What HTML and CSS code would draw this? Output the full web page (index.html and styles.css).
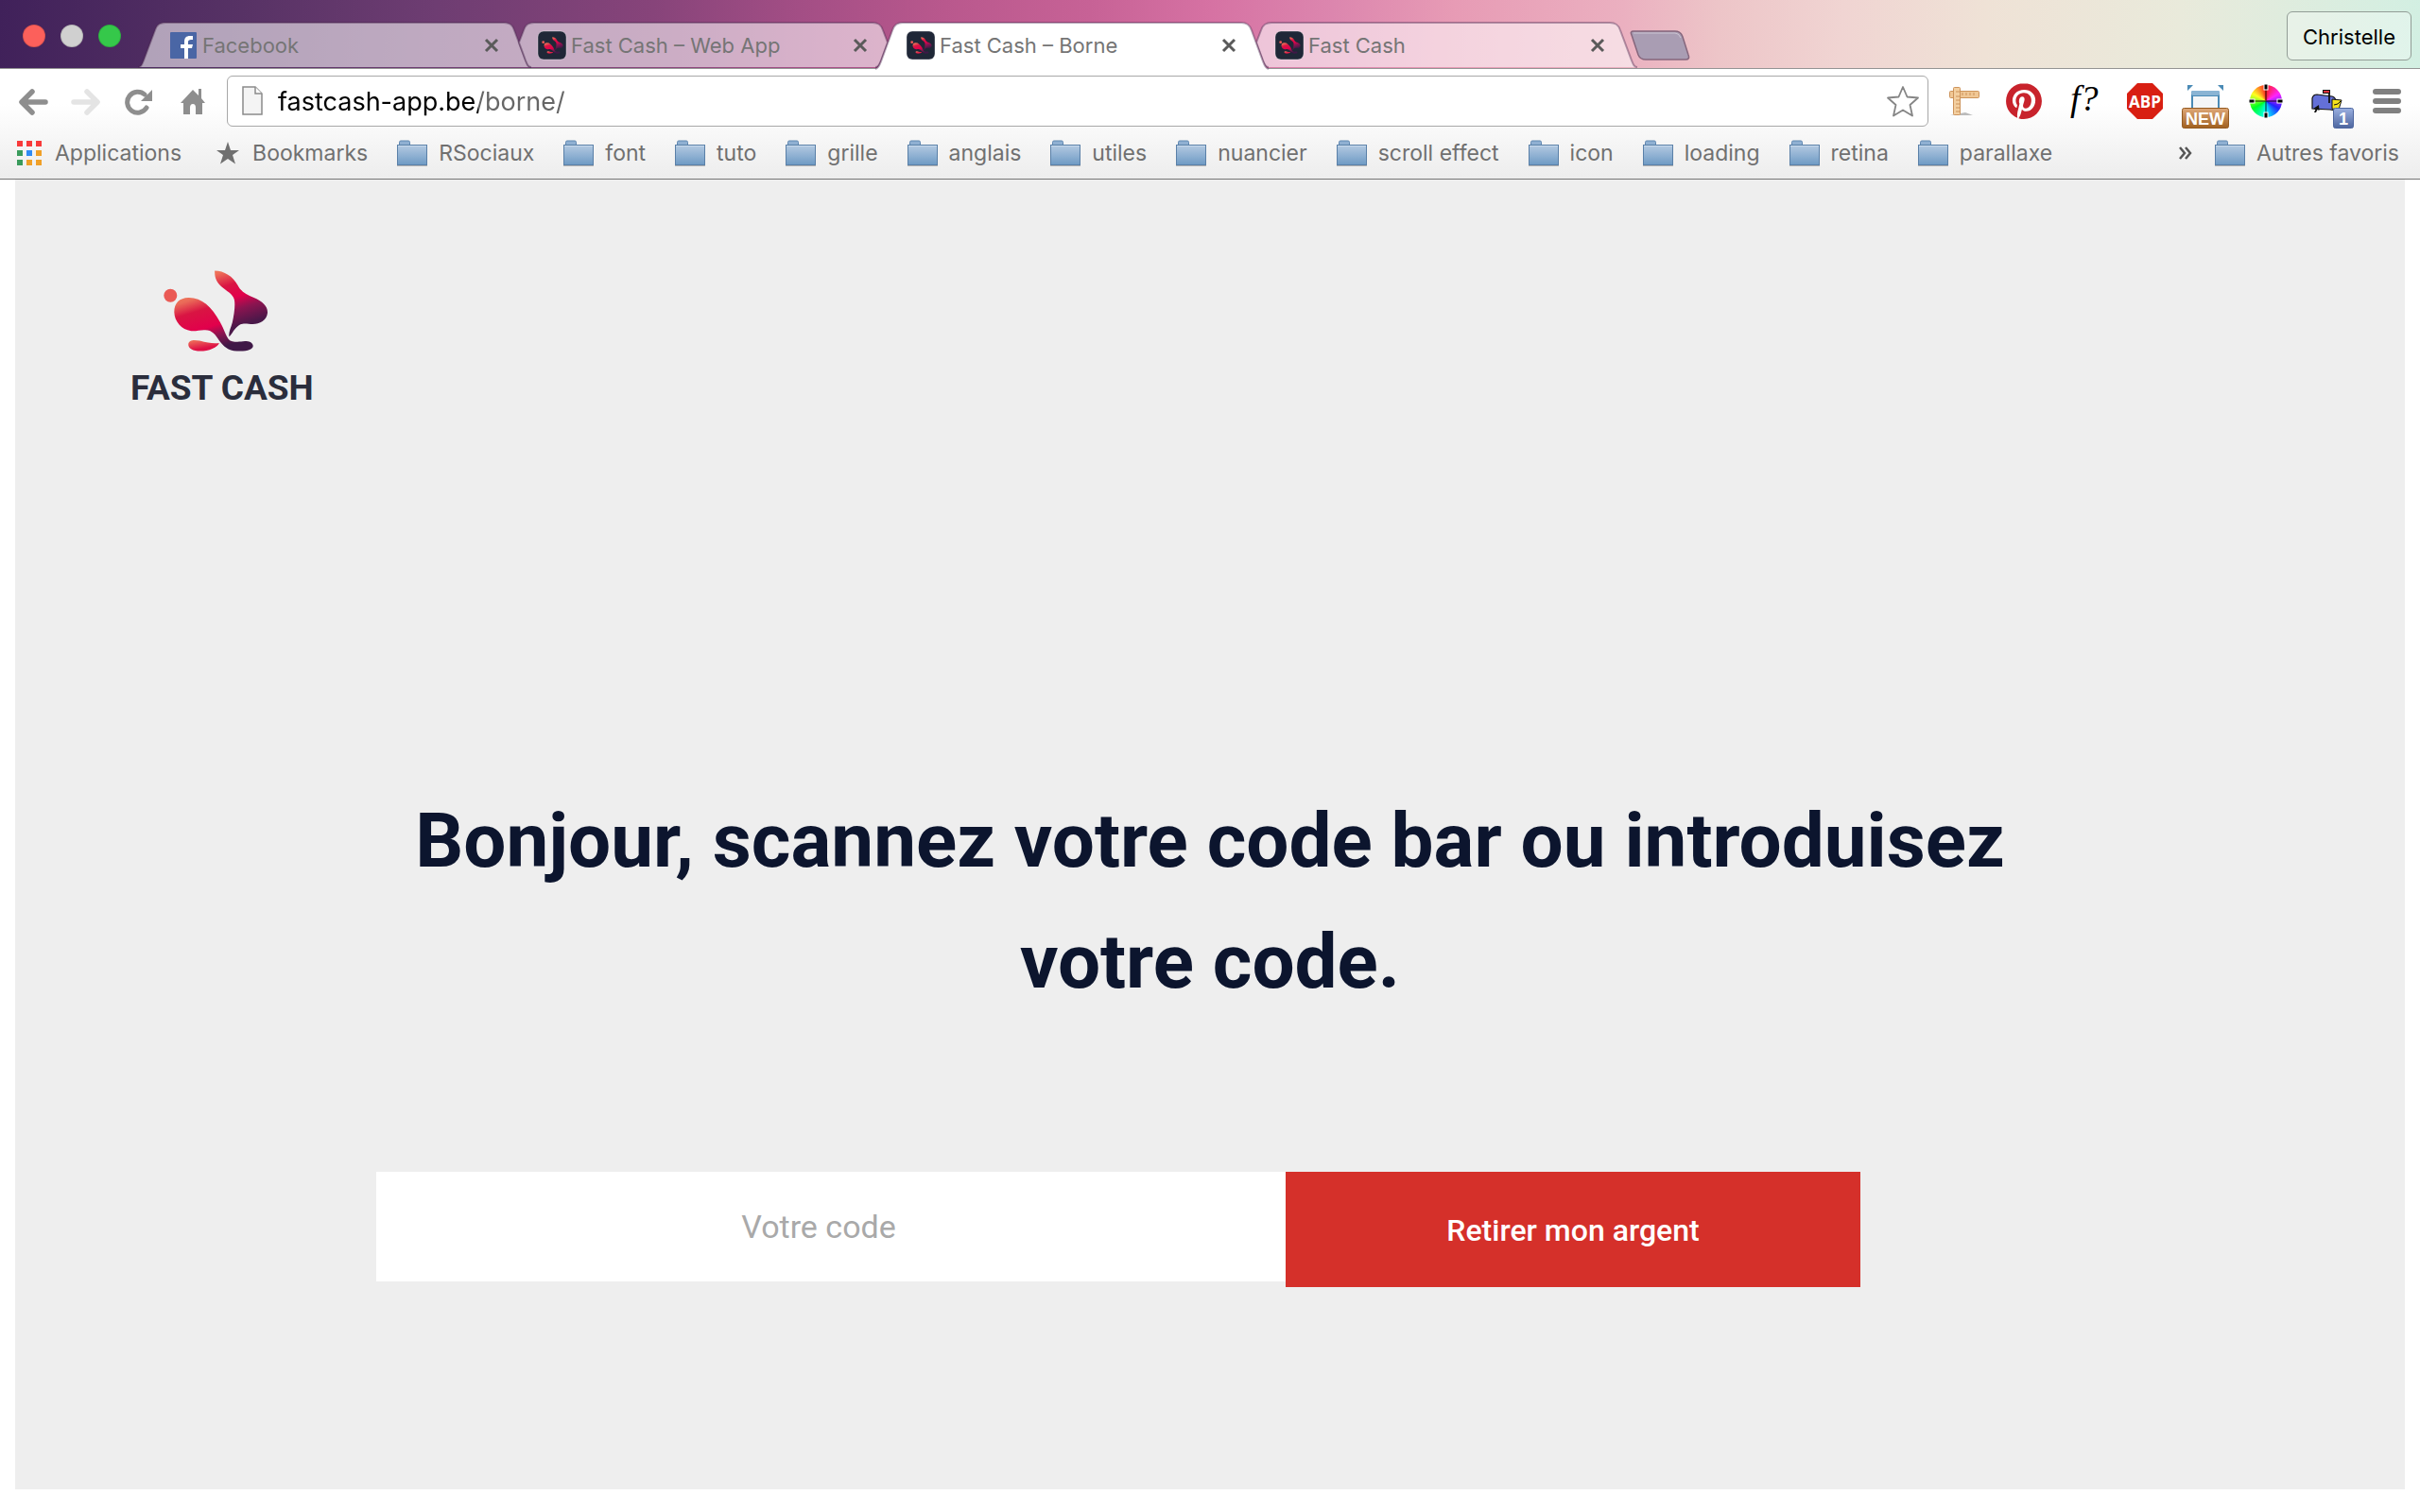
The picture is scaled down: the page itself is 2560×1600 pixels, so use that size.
FILE: index.html
```html
<!DOCTYPE html>
<html lang="fr">
<head>
<meta charset="utf-8">
<meta name="viewport" content="width=device-width, initial-scale=1">
<title>Fast Cash – Borne</title>
<link rel="stylesheet" href="styles.css">
</head>
<body>
<svg class="defs" aria-hidden="true">
  <defs>
    <linearGradient id="g-body" x1="0" y1="0" x2=".45" y2="1">
      <stop offset="0" stop-color="#f07a5c"/><stop offset=".12" stop-color="#ea6a58"/><stop offset=".32" stop-color="#d91543"/>
      <stop offset=".62" stop-color="#e2004c"/><stop offset=".78" stop-color="#8c1450"/><stop offset="1" stop-color="#3f1847"/>
    </linearGradient>
    <linearGradient id="g-ear" x1=".2" y1="0" x2=".45" y2="1">
      <stop offset="0" stop-color="#ee7158"/><stop offset=".22" stop-color="#d91543"/><stop offset=".42" stop-color="#e2004c"/>
      <stop offset=".6" stop-color="#8c1450"/><stop offset=".85" stop-color="#4a1849"/>
    </linearGradient>
    <linearGradient id="g-foot" x1="0" y1="0" x2=".5" y2="1">
      <stop offset="0" stop-color="#f07a5c"/><stop offset=".8" stop-color="#de1045"/>
    </linearGradient>
    <linearGradient id="g-folder" x1="0" y1="0" x2="0" y2="1">
      <stop offset="0" stop-color="#b4cae2"/><stop offset="1" stop-color="#6e9ac4"/>
    </linearGradient>
    <linearGradient id="g-new" x1="0" y1="0" x2="0" y2="1">
      <stop offset="0" stop-color="#dfa878"/><stop offset="1" stop-color="#a0601f"/>
    </linearGradient>
    <linearGradient id="g-count" x1="0" y1="0" x2="0" y2="1">
      <stop offset="0" stop-color="#9bb0e0"/><stop offset="1" stop-color="#4d669f"/>
    </linearGradient>
    <symbol id="rabbit" viewBox="216 74 340 264">
      <circle cx="241" cy="157" r="21" fill="#ea5a55"/>
      <path fill="url(#g-body)" d="M253 210C253 180 270 165 298 164C340 163 372 193 398 240C412 264 417 285 426 296C434 305 450 305 466 304C478 300 503 302 504 317C504 329 485 334 455 334C425 335 410 318 396 300C384 282 374 267 352 267C336 266 325 271 307 270C276 266 254 240 253 210Z"/>
      <path fill="url(#g-ear)" d="M382 78C412 78 440 96 455 124C466 146 484 154 505 163C535 175 551 192 550 212C548 236 525 248 503 248C485 248 473 243 459 252C443 263 439 278 428 288C425 275 433 262 438 243C444 217 448 185 444 169C438 151 420 143 405 130C388 116 381 100 382 78Z"/>
      <path fill="url(#g-foot)" d="M298 311C300 298 316 297 334 301C360 308 378 310 396 308C392 322 362 334 336 334C313 333 297 326 298 311Z"/>
    </symbol>
    <symbol id="folder" viewBox="0 0 32 28">
      <path d="M2.500 6V2.500Q2.500 1 4 1H12Q13.500 1 13.500 2.500V6Z" fill="#8fb0d2" stroke="#5f87b0"/>
      <rect x=".5" y="5.500" width="31" height="21" fill="url(#g-folder)" stroke="#5a80a8"/>
      <path d="M1 6.500H31" stroke="#c8daec"/>
      <path d="M0 27.500H32" stroke="#000" stroke-opacity=".25"/>
    </symbol>
    <symbol id="close" viewBox="0 0 16 16"><path d="M2 2L14 14M14 2L2 14" stroke="#5a5a5a" stroke-width="3"/></symbol>
    <symbol id="app" viewBox="0 0 32 32">
      <rect x="1" y="1" width="30" height="30" rx="6" fill="#1f2737" stroke="#fff" stroke-opacity=".35"/>
      <use href="#rabbit" x="5" y="7" width="23" height="18"/>
    </symbol>
  </defs>
</svg>

<header class="browser">
  <div class="strip">
    <div class="lights">
      <button class="light red" aria-label="Fermer"></button>
      <button class="light gray" aria-label="Réduire"></button>
      <button class="light green" aria-label="Agrandir"></button>
    </div>
    <div class="tabs">
      <div class="tab first">
        <svg class="shape" viewBox="0 0 416 49" preserveAspectRatio="none"><path d="M0 48C3 48 4 46 6 41L18 9C20 3 23 1 29 1H387C393 1 396 3 398 9L410 41C412 46 413 48 416 48"/></svg>
        <div class="tab-in">
          <svg class="fav" viewBox="0 0 32 32"><rect x="2" y="2" width="28" height="28" rx="1" fill="#4a66a5"/><path fill="#fff" d="M17 30V19H13V15H17V12C17 8 19 6 23 6H26V10H24C22 10 21 11 21 12V15H26L25 19H21V30Z"/></svg>
          <span class="title">Facebook</span>
          <button class="x" aria-label="Fermer l'onglet"><svg viewBox="0 0 16 16"><use href="#close"/></svg></button>
        </div>
      </div>
      <div class="tab second">
        <svg class="shape" viewBox="0 0 416 49" preserveAspectRatio="none"><path d="M26 48C23 48 22 46 20 41L13 22L18 9C20 3 23 1 29 1H387C393 1 396 3 398 9L403 22L396 41C394 46 393 48 390 48"/></svg>
        <div class="tab-in">
          <svg class="fav" viewBox="0 0 32 32"><use href="#app"/></svg>
          <span class="title">Fast Cash – Web App</span>
          <button class="x" aria-label="Fermer l'onglet"><svg viewBox="0 0 16 16"><use href="#close"/></svg></button>
        </div>
      </div>
      <div class="tab active">
        <svg class="shape" viewBox="0 0 416 49" preserveAspectRatio="none"><path d="M0 49C3 48 4 46 6 41L18 9C20 3 23 1 29 1H387C393 1 396 3 398 9L410 41C412 46 413 48 416 49"/></svg>
        <div class="tab-in">
          <svg class="fav" viewBox="0 0 32 32"><use href="#app"/></svg>
          <span class="title">Fast Cash – Borne</span>
          <button class="x" aria-label="Fermer l'onglet"><svg viewBox="0 0 16 16"><use href="#close"/></svg></button>
        </div>
      </div>
      <div class="tab last">
        <svg class="shape" viewBox="0 0 416 49" preserveAspectRatio="none"><path d="M26 48C23 48 22 46 20 41L13 22L18 9C20 3 23 1 29 1H387C393 1 396 3 398 9L410 41C412 46 413 48 416 48"/></svg>
        <div class="tab-in">
          <svg class="fav" viewBox="0 0 32 32"><use href="#app"/></svg>
          <span class="title">Fast Cash</span>
          <button class="x" aria-label="Fermer l'onglet"><svg viewBox="0 0 16 16"><use href="#close"/></svg></button>
        </div>
      </div>
    </div>
    <button class="newtab" aria-label="Nouvel onglet">
      <svg viewBox="0 0 64 32"><path d="M4 1H48Q54 1 56 7L62 26Q64 31 59 31H17Q11 31 9 26L2 5Q0 1 4 1Z" fill="#a99db3" stroke="#85667c" stroke-width="1.500"/><path d="M4 3H48Q52 3 54 8" fill="none" stroke="#fff" stroke-opacity=".4"/></svg>
    </button>
    <button class="profile">Christelle</button>
  </div>

  <div class="toolbar">
    <nav class="navs">
      <button aria-label="Retour"><svg viewBox="0 0 32 28"><path d="M15 3L4 14L15 25M5 14H29" fill="none" stroke="#8e8e8e" stroke-width="5.500" stroke-linecap="round" stroke-linejoin="round"/></svg></button>
      <button aria-label="Avancer"><svg viewBox="0 0 32 28"><path d="M17 3L28 14L17 25M3 14H27" fill="none" stroke="#e4e4e4" stroke-width="5.500" stroke-linecap="round" stroke-linejoin="round"/></svg></button>
      <button aria-label="Actualiser"><svg viewBox="0 0 32 28"><path d="M24 20A11 11 0 1 1 22 6" fill="none" stroke="#8e8e8e" stroke-width="5" stroke-linecap="round"/><path d="M30 1V13H18Z" fill="#8e8e8e"/></svg></button>
      <button aria-label="Accueil"><svg viewBox="0 0 32 28"><path fill="#8e8e8e" d="M17 1L23 7V0H26V10L30 15H27V27H20V20Q20 16 17 16Q14 16 14 20V27H7V15H4Z"/></svg></button>
    </nav>
    <div class="address">
      <svg class="doc" viewBox="0 0 22 32"><path d="M1 1H14L21 8V30H1Z" fill="#f4f4f4" stroke="#8a8a8a" stroke-width="1.500"/><path d="M14 1V8H21" fill="#fff" stroke="#8a8a8a" stroke-width="1.500"/></svg>
      <input class="url" type="text" aria-label="Adresse" value="fastcash-app.be/borne/">
      <button class="fave" aria-label="Ajouter aux favoris"><svg viewBox="0 0 36 34"><path d="M18 2L22.500 12.500L34 13.500L25.500 21L28 32.500L18 26.500L8 32.500L10.500 21L2 13.500L13.500 12.500Z" fill="#fff" stroke="#858585" stroke-width="1.800" stroke-linejoin="round"/></svg></button>
    </div>
    <div class="exts">
      <button aria-label="Règle"><svg viewBox="0 0 64 60"><path d="M18 45H42L34 42Z" fill="#bbb"/><rect x="17.500" y="19.500" width="31" height="7" rx="1" fill="#f0c795" stroke="#cd935a"/><rect x="21.500" y="15.500" width="7" height="29" rx="1" fill="#f3cfa0" stroke="#cd935a"/><path d="M31 21V24M35 21V24M39 21V24M43 21V24M24 29H28M24 33H28M24 37H28M24 41H28M24 25H28M24 20H28" stroke="#cd935a"/></svg></button>
      <button aria-label="Pinterest"><svg viewBox="0 0 64 60"><circle cx="32" cy="30" r="18" fill="#fff"/><path transform="translate(13 11) scale(1.583)" fill="#c8232c" d="M12.017 0C5.396 0 .029 5.367.029 11.987c0 5.079 3.158 9.417 7.618 11.162-.105-.949-.199-2.403.041-3.439.219-.937 1.406-5.957 1.406-5.957s-.359-.72-.359-1.781c0-1.663.967-2.911 2.168-2.911 1.024 0 1.518.769 1.518 1.688 0 1.029-.653 2.567-.992 3.992-.285 1.193.6 2.165 1.775 2.165 2.128 0 3.768-2.245 3.768-5.487 0-2.861-2.063-4.869-5.008-4.869-3.410 0-5.409 2.562-5.409 5.199 0 1.033.394 2.143.889 2.741.099.120.112.225.085.345-.090.375-.293 1.199-.334 1.363-.053.225-.172.271-.401.165-1.495-.690-2.433-2.878-2.433-4.646 0-3.776 2.748-7.252 7.920-7.252 4.158 0 7.392 2.967 7.392 6.923 0 4.135-2.607 7.462-6.233 7.462-1.214 0-2.354-.629-2.758-1.379l-.749 2.848c-.269 1.045-1.004 2.352-1.498 3.146 1.123.345 2.306.535 3.550.535 6.607 0 11.985-5.365 11.985-11.987C23.970 5.390 18.592.026 11.985.026L12.017 0z"/></svg></button>
      <button aria-label="Polices"><svg viewBox="0 0 64 60"><text class="fq" x="17" y="40">f?</text></svg></button>
      <button aria-label="Adblock Plus"><svg viewBox="0 0 64 60"><path d="M24 11H40L51 22V38L40 49H24L13 38V22Z" fill="#d81f12"/><text class="abp" x="32" y="37" text-anchor="middle">ABP</text></svg></button>
      <button aria-label="Fenêtre"><svg viewBox="0 0 64 60"><path d="M13 13H19L13 19ZM51 13H45L51 19Z" fill="#4a8ab5"/><rect x="17" y="19" width="30" height="24" rx="2" fill="#4a8ab5"/><rect x="17" y="19" width="30" height="5" rx="2" fill="#8ab4d4"/><rect x="19" y="25" width="26" height="14" fill="#f4f6f8"/><rect x="7.500" y="37.500" width="49" height="21" rx="2" fill="url(#g-new)" stroke="#945a20"/><text class="badge" x="32" y="55" text-anchor="middle">NEW</text></svg></button>
      <button aria-label="Pipette" class="wheel"><span class="hues"></span><svg viewBox="0 0 64 60"><path d="M32 14V46M16 30H48" stroke="#000" stroke-opacity=".6" stroke-width="1.500"/><g fill="#000" stroke="#fff" stroke-width="1"><rect x="30" y="12" width="4" height="6"/><rect x="30" y="42" width="4" height="6"/><rect x="14" y="28" width="6" height="4"/><rect x="44" y="28" width="6" height="4"/></g></svg></button>
      <button aria-label="Courrier"><svg viewBox="0 0 64 60"><path d="M17 38V27Q18 23 22 23L38 25Q42 26 42 31V40L36 39Z" fill="#6470d8" stroke="#111" stroke-width="1.200"/><path d="M38 28L48 29L45 39L38 38Z" fill="#f6e21c" stroke="#111"/><path d="M40 34L44 33L47 30" fill="none" stroke="#111"/><path d="M35 32V19" stroke="#111" stroke-width="1.800"/><rect x="28.500" y="18.500" width="7" height="3" fill="#e0303a" stroke="#111"/><path d="M24 34L18 38L20.500 38.500L19 42L21 42L22.500 39L24.500 40Z" fill="#111"/><rect x="39.500" y="37.500" width="21" height="21" rx="2" fill="url(#g-count)" stroke="#4d669f"/><text class="badge" x="50" y="55" text-anchor="middle">1</text></svg></button>
      <button aria-label="Menu"><svg viewBox="0 0 64 60"><path d="M20 20H44M20 30H44M20 40H44" stroke="#808080" stroke-width="6" stroke-linecap="round"/></svg></button>
    </div>
  </div>

  <nav class="marks" aria-label="Favoris">
    <a href="#" class="apps"><svg viewBox="0 0 26 26"><path d="M0 0H6V6H0ZM10 0H16V6H10ZM20 0H26V6H20Z" fill="#f83a3a"/><path d="M0 10H6V16H0ZM0 20H6V26H0Z" fill="#3a9b5c"/><path d="M10 10H16V16H10Z" fill="#2f8bf5"/><path d="M20 10H26V16H20ZM10 20H16V26H10ZM20 20H26V26H20Z" fill="#f0a028"/></svg>Applications</a>
    <a href="#" class="starred"><svg viewBox="0 0 24 24"><path fill="#707070" d="M12 0L15 9H24L17 14L20 23.500L12 18L4 23.500L7 14L0 9H9Z"/></svg>Bookmarks</a>
    <a href="#"><svg><use href="#folder"/></svg>RSociaux</a>
    <a href="#"><svg><use href="#folder"/></svg>font</a>
    <a href="#"><svg><use href="#folder"/></svg>tuto</a>
    <a href="#"><svg><use href="#folder"/></svg>grille</a>
    <a href="#"><svg><use href="#folder"/></svg>anglais</a>
    <a href="#"><svg><use href="#folder"/></svg>utiles</a>
    <a href="#"><svg><use href="#folder"/></svg>nuancier</a>
    <a href="#"><svg><use href="#folder"/></svg>scroll effect</a>
    <a href="#"><svg><use href="#folder"/></svg>icon</a>
    <a href="#"><svg><use href="#folder"/></svg>loading</a>
    <a href="#"><svg><use href="#folder"/></svg>retina</a>
    <a href="#"><svg><use href="#folder"/></svg>parallaxe</a>
    <button class="more" aria-label="Plus de favoris"><svg viewBox="0 0 14 14"><path d="M1 1L6 7L1 13M7 1L12 7L7 13" fill="none" stroke="#555" stroke-width="2.500"/></svg></button>
    <a href="#"><svg><use href="#folder"/></svg>Autres favoris</a>
  </nav>
</header>

<main class="kiosk">
  <a href="#" class="logo">
    <svg viewBox="216 74 340 264"><use href="#rabbit" x="216" y="74" width="340" height="264"/></svg>
    <span>FAST CASH</span>
  </a>
  <section class="welcome">
    <h1>Bonjour, scannez votre code bar ou introduisez votre code.</h1>
    <form class="withdraw">
      <input type="text" placeholder="Votre code" aria-label="Votre code">
      <button type="button">Retirer mon argent</button>
    </form>
  </section>
</main>
</body>
</html>
```
FILE: styles.css
```css
* { box-sizing: border-box; }

body {
  margin: 0;
  min-height: 100vh;
  display: flex;
  flex-direction: column;
  background: #fff;
  font-family: Roboto, "Liberation Sans", sans-serif;
}

button, input {
  margin: 0;
  padding: 0;
  border: 0;
  background: none;
  font: inherit;
}

svg { display: block; }
.defs { position: absolute; width: 0; height: 0; }

.browser {
  font-family: Inter, "Liberation Sans", sans-serif;
  background: linear-gradient(#fff 72px, #fff 110px, #ededed 188px);
  border-bottom: 1px solid #757575;
}

/* Window title bar and tabs */
.strip {
  display: flex;
  height: 73px;
  padding-right: 9px;
  border-bottom: 1px solid #949494;
  background: linear-gradient(93deg, #40215a 0%, #573265 10%, #6e3d72 18%, #87447a 27%, #a34e85 33%, #b9588d 39%, #c76296 45%, #d672a3 50%, #dc86ae 55%, #e79bb5 60%, #ebb0c0 67%, #edc5c8 71%, #f0d4d2 76%, #efe2d6 82%, #e9eadb 90%, #d2efe2 100%);
}

.lights {
  display: flex;
  gap: 16px;
  padding: 26px 18px 0 24px;
}
.light {
  width: 24px;
  height: 24px;
  border: 1px solid rgba(0, 0, 0, .12);
  border-radius: 50%;
}
.red { background: #fc605b; }
.gray { background: #d0d0d0; }
.green { background: #35c84a; }

.tabs { display: flex; height: 72px; padding-top: 23px; }
.tab {
  display: grid;
  width: 416px;
  height: 49px;
  margin-right: -26px;
}
.tab > * { grid-area: 1 / 1; }
.shape {
  width: 100%;
  height: 49px;
  overflow: visible;
  fill: rgba(255, 255, 255, .56);
  stroke: rgba(70, 35, 75, .4);
  stroke-width: 2px;
}
.active { z-index: 2; height: 50px; }
.active .shape { height: 50px; fill: #fff; }
.tab-in {
  z-index: 1;
  display: flex;
  align-items: center;
  height: 48px;
  padding: 2px 34px 0 32px;
}
.fav { width: 32px; height: 32px; margin-right: 4px; }
.title { flex: 1; font-size: 22px; line-height: 28px; color: #757575; white-space: nowrap; }
.x svg { width: 16px; height: 16px; }

.newtab { align-self: flex-start; margin: 32px 0 0 18px; }
.newtab svg { width: 64px; height: 32px; }
.profile {
  align-self: flex-start;
  width: 132px;
  height: 52px;
  margin: 12px 0 0 auto;
  padding-top: 2px;
  border: 1px solid #929d96;
  border-radius: 6px;
  background: rgba(255, 255, 255, .3);
  font-size: 22px;
  color: #000;
}

/* Navigation row */
.toolbar { display: flex; height: 65px; padding-right: 3px; }
.navs { display: flex; align-items: flex-start; gap: 24px; padding: 21px 21px 0 19px; }
.navs svg { width: 32px; height: 28px; }
.address {
  flex: 1;
  display: flex;
  align-items: center;
  height: 54px;
  margin: 7px 5px 0 0;
  padding: 0 8px 0 15px;
  border: 1px solid #a8a8a8;
  border-radius: 6px;
  background: #fff;
}
.doc { width: 22px; height: 32px; }
.url {
  flex: 1;
  margin-left: 16px;
  height: 40px;
  font-size: 27px;
  color: transparent;
  background: linear-gradient(90deg, #000 212px, #666 212px);
  -webkit-background-clip: text;
  background-clip: text;
}
.fave svg { width: 36px; height: 34px; }
.exts { display: flex; padding-top: 4px; height: 64px; }
.exts svg { width: 64px; height: 60px; }
.wheel { display: grid; place-items: center; }
.wheel > * { grid-area: 1 / 1; }
.hues {
  width: 34px;
  height: 34px;
  border-radius: 50%;
  background: conic-gradient(#f22, #f2f, #22f, #0ff, #0f2, #ff2, #f22);
}
.fq { font: italic 38px "Liberation Serif", serif; }
.abp { font: bold 17px "Open Sans", sans-serif; fill: #fff; }
.badge { font: bold 18px "Liberation Sans", sans-serif; fill: #fff; }

/* Bookmarks bar */
.marks {
  display: flex;
  align-items: center;
  gap: 31px;
  height: 51px;
  padding: 0 22px 4px 18px;
}
.marks a {
  display: flex;
  align-items: center;
  gap: 12px;
  font-size: 23px;
  line-height: 28px;
  color: #707070;
  text-decoration: none;
  white-space: nowrap;
}
.marks a svg { width: 32px; height: 28px; }
.marks .apps { gap: 14px; margin-right: 6px; }
.marks .apps svg { width: 26px; height: 26px; }
.marks .starred { gap: 14px; }
.marks .starred svg { width: 24px; height: 24px; }
.more { margin-left: auto; }
.more svg { width: 14px; height: 14px; }
.marks .more + a { margin-left: -7px; }

/* Kiosk page */
.kiosk {
  flex: 1;
  margin: 0 16px 24px;
  padding: 95px 122px 0;
  background: #eee;
}
.logo {
  display: inline-flex;
  flex-direction: column;
  gap: 14px;
  color: #2a2d3c;
  font-size: 37px;
  line-height: 48px;
  font-weight: 700;
  text-decoration: none;
}
.logo svg { width: 113px; height: 88px; margin-left: 34px; }
.welcome {
  max-width: 1764px;
  margin: 391px auto 0;
}
h1 {
  margin: 0 0 158px;
  font-size: 80px;
  line-height: 128px;
  font-weight: 700;
  text-align: center;
  color: #0c152e;
}
.withdraw { display: flex; align-items: flex-start; font-size: 32px; }
.withdraw input {
  flex: 0 1 962px;
  min-width: 0;
  height: 116px;
  padding-right: 26px;
  background: #fff;
  color: #0c152e;
  font-size: 34px;
  text-align: center;
}
.withdraw input::placeholder { color: #a9a9a9; opacity: 1; }
.withdraw button {
  flex: 0 1 608px;
  height: 122px;
  padding-top: 2px;
  background: #d5302a;
  color: #fff;
  font-weight: 500;
}
```
